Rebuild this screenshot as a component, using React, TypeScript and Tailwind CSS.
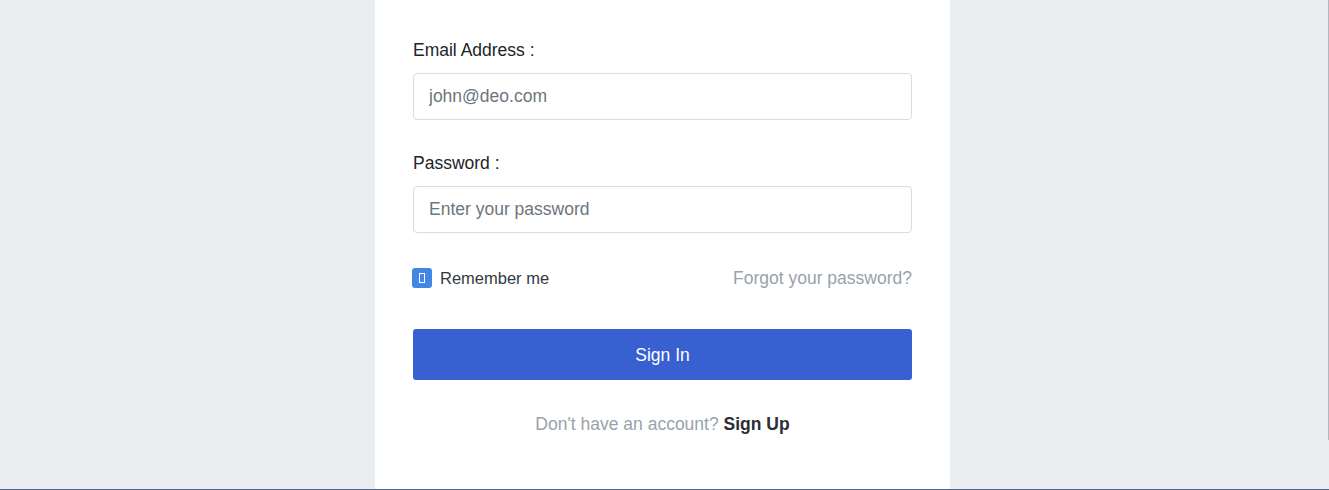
import { useState } from 'react';

const App = () => {
  const [remember, setRemember] = useState(true);
  return (
    <div className="h-[490px] w-full bg-[#ebeef0] flex justify-center pr-[4px] border-b border-[#4d6a94] font-['Liberation_Sans',Arial,sans-serif] overflow-hidden">
      <div className="w-[575px] bg-white px-[38px] pt-[39px] pb-[40px] flex flex-col">
        <label className="text-[17.5px] leading-[22px] text-[#212529]">Email Address :</label>
        <input
          className="mt-[12px] h-[47px] w-full rounded-[4px] border border-[#dcdcdc] px-[15px] text-[17.5px] text-[#495057] placeholder:text-[#6c757d] outline-none"
          placeholder="john@deo.com"
        />
        <label className="mt-[32px] text-[17.5px] leading-[22px] text-[#212529]">Password :</label>
        <input
          type="password"
          className="mt-[12px] h-[47px] w-full rounded-[4px] border border-[#dcdcdc] px-[15px] text-[17.5px] text-[#495057] placeholder:text-[#6c757d] outline-none"
          placeholder="Enter your password"
        />
        <div className="mt-[32px] flex items-center justify-between">
          <button onClick={() => setRemember(!remember)} className="flex items-center gap-[8px] -ml-px">
            <span className="w-[20px] h-[20px] rounded-[3px] bg-[#4486e6] flex items-center justify-center">
              {remember && <span className="w-[6px] h-[10px] border border-white" />}
            </span>
            <span className="text-[16.5px] text-[#343a40]">Remember me</span>
          </button>
          <a href="#" className="text-[17.5px] text-[#98a2ab]">Forgot your password?</a>
        </div>
        <button className="mt-[38px] h-[51px] w-full rounded-[3px] bg-[#3860d1] text-white text-[17.5px]">
          Sign In
        </button>
        <p className="mt-[31px] text-center text-[17.5px] text-[#98a2ab]">
          Don't have an account? <a href="#" className="font-bold text-[#2b2f36]">Sign Up</a>
        </p>
      </div>
      <div className="absolute right-0 top-0 w-px h-[440px] bg-[#b5b9bd]" />
    </div>
  );
};

export default App;
